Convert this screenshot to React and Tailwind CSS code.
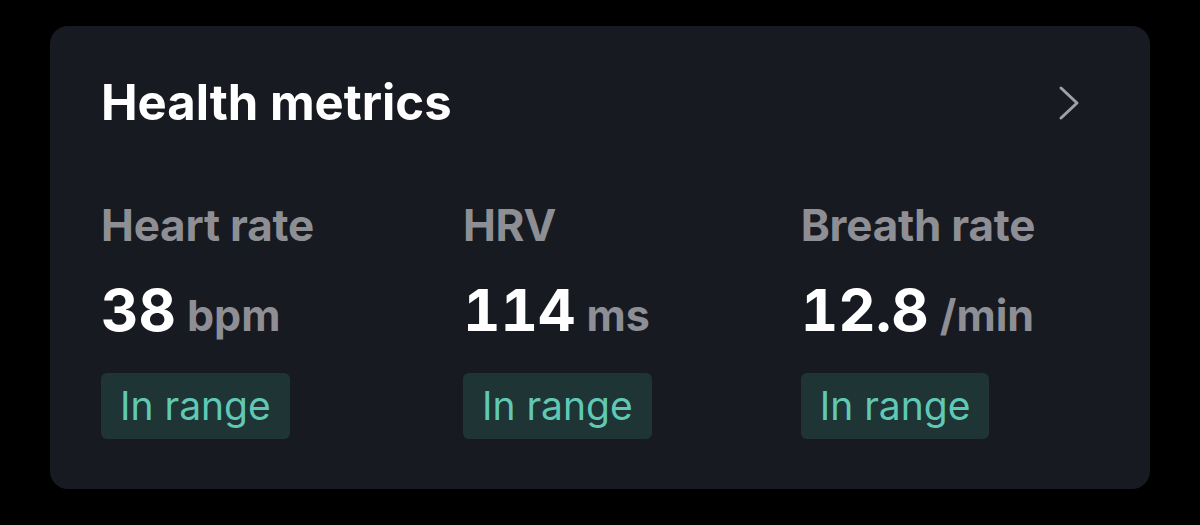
export default function App() {
  const metrics = [
    { label: "Heart rate", value: "38", unit: "bpm" },
    { label: "HRV", value: "114", unit: "ms" },
    { label: "Breath rate", value: "12.8", unit: "/min" },
  ];
  return (
    <div className="w-[1200px] h-[525px] bg-black pt-[26px] pl-[50px]" style={{ fontFamily: "Inter, 'Liberation Sans', sans-serif" }}>
      <div className="w-[1100px] h-[463px] rounded-[18px] bg-[#181a22] pl-[51px] pr-[68px] pt-[49px]">
        <div className="flex items-center justify-between">
          <h1 className="text-[49px] leading-[56px] font-bold text-white">Health metrics</h1>
          <svg width="26" height="38" viewBox="0 0 26 38" fill="none" stroke="#a0a1a7" strokeWidth="3" strokeLinecap="round" strokeLinejoin="round">
            <path d="M5 4 L21 19 L5 34" />
          </svg>
        </div>
        <div className="flex gap-[149px] mt-[70px]">
          {metrics.map((m) => (
            <div key={m.label} className="flex flex-col items-start">
              <div className="text-[44px] leading-[48px] font-bold text-[#8e8f95] tracking-[-0.005em]">{m.label}</div>
              <div className="mt-[31px] flex items-baseline gap-[11px]">
                <span className="text-[58px] leading-[60px] font-bold text-white tabular-nums">{m.value}</span>
                <span className="text-[43px] leading-[48px] font-bold text-[#8e8f95]">{m.unit}</span>
              </div>
              <div className="mt-[33px] h-[66px] px-[19px] rounded-[6px] bg-[#1f3435] flex items-center text-[39px] text-[#5fc9b6]">In range</div>
            </div>
          ))}
        </div>
      </div>
    </div>
  );
}
